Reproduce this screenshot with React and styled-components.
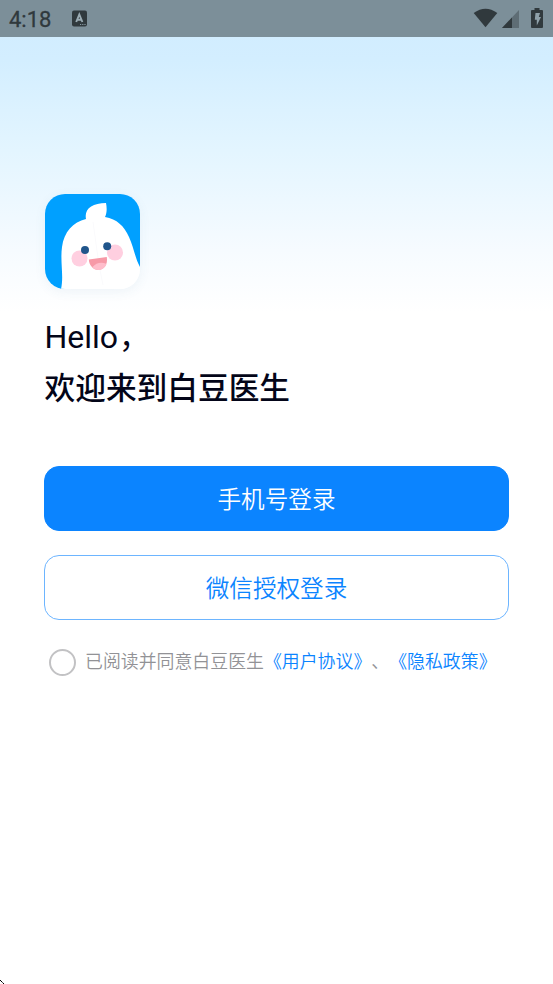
import React, { useState } from "react";
import styled, { createGlobalStyle } from "styled-components";

const GlobalStyle = createGlobalStyle`
  * { box-sizing: border-box; }
  body { margin: 0; background: #fff; font-family: Roboto, "Noto Sans CJK SC", sans-serif; text-spacing-trim: space-all; }
  button { font-family: inherit; text-spacing-trim: inherit; }
`;

const Screen = styled.div`
  position: relative;
  height: 984px;
  overflow: hidden;
  background: linear-gradient(180deg, #cfecff 0, #d3eeff 60px, #e3f5ff 150px, #f6fbff 250px, #fff 312px);
`;

const StatusBar = styled.header`
  height: 37px;
  display: flex;
  align-items: center;
  padding: 0 9px;
  background: #7c8f99;
  color: #30393d;
`;

const Clock = styled.span`
  width: 63px;
  font-size: 22px;
  font-weight: 400;
  -webkit-text-stroke: 0.3px currentColor;
  line-height: 26px;
  padding-top: 2px;
`;

const StatusIcons = styled.svg`
  display: block;
  margin-left: auto;
`;

const Content = styled.main`
  display: flex;
  flex-direction: column;
  padding: 157px 44px 0;
`;

const Logo = styled.svg`
  display: block;
  width: 95px;
  height: 95px;
  margin-left: 1px;
  border-radius: 20px;
  box-shadow: 0 3px 12px rgba(60, 110, 160, 0.07);
`;

const Hello = styled.div`
  margin: 23px 0 0 0.4px;
  height: 51px;
  line-height: 50px;
  font-size: 32px;
  color: #030518;
`;

const Comma = styled.span`
  margin-left: 1px;
  font-size: 30.7px;
`;

const Title = styled.h1`
  margin: 0 0 0 0.5px;
  height: 51px;
  line-height: 51px;
  font-size: 30.7px;
  font-weight: 500;
  color: #030518;
`;

const LoginButton = styled.button`
  height: 65px;
  margin-top: ${(p) => p.$gap}px;
  padding: ${(p) => (p.$filled ? 3 : 2)}px 0 0;
  border: 1px solid ${(p) => (p.$filled ? "#0b84ff" : "#6db5ff")};
  border-radius: 15px;
  background: ${(p) => (p.$filled ? "#0b84ff" : "#fff")};
  color: ${(p) => (p.$filled ? "#fff" : "#0b84ff")};
  font-size: 23.6px;
  font-weight: 350;
  line-height: 34px;
`;

const Agreement = styled.div`
  display: flex;
  align-items: center;
  height: 28px;
  margin: 28px 0 0 5px;
  font-family: "Noto Sans CJK SC", sans-serif;
  font-size: 17.9px;
  font-weight: 350;
  line-height: 28px;
  white-space: nowrap;
  color: #929296;
`;

const Radio = styled.button`
  flex: none;
  width: 27px;
  height: 27px;
  margin: 0 9px 0 0;
  padding: 0;
  border: 2px solid #c2c2c4;
  border-radius: 50%;
  background: ${(p) => (p.$checked ? "#0b84ff" : "#fff")};
`;

const Terms = styled.span`
  padding-bottom: 4px;
`;

const Link = styled.span`
  color: #0b84ff;
`;

const Cursor = styled.svg`
  position: absolute;
  left: 0;
  bottom: 0;
`;

function BeanLogo() {
  return (
    <Logo viewBox="0 0 95 95">
      <path d="M0 0H95V73L70 95H0Z" fill="#00a0ff" />
      <path
        d="M16 95 C19 82 15 68 17 53 C19 38 28 28 41 25 C39 15 47 9 61 9 C62 14 62 19 60 23 C72 25 79 32 84 43 C89 54 90 64 95 73 V95 Z"
        fill="#fff"
      />
      <path d="M48 28 C51 48 53 69 58 91" fill="none" stroke="#fafafc" strokeWidth="1" />
      <circle cx="34.5" cy="64.5" r="8" fill="#ffcfe0" />
      <circle cx="70" cy="58.5" r="8" fill="#ffcfe0" />
      <circle cx="40" cy="56" r="4" fill="#20558b" />
      <circle cx="62.2" cy="52.3" r="4" fill="#20558b" />
      <path d="M43.8 65.5 L61.8 63 C63 71 59 75 54 76 C48 76 44 71 43.8 65.5Z" fill="#f799a7" />
      <path d="M47.5 73 C51 68.5 57 67.5 61.5 70 C58 78 50 77 47.5 73Z" fill="#ffbdcb" />
    </Logo>
  );
}

export default function App() {
  const [checked, setChecked] = useState(false);
  return (
    <>
      <GlobalStyle />
      <Screen>
        <StatusBar>
          <Clock>4:18</Clock>
          <svg width="15" height="17" viewBox="0 -0.5 15 17">
            <rect width="15" height="16" rx="2" fill="#30393d" />
            <path d="M4.2 11.5 7.3 4 10.4 11.5M5.2 9.2h4.2" fill="none" stroke="#9aabb3" strokeWidth="1.9" />
            <path d="M8 14h1.2M10.2 14h1.2M12.4 14h1.2" stroke="#8799a2" strokeWidth="1" />
          </svg>
          <StatusIcons width="71" height="21" viewBox="473 8 71 21">
            <path d="M473.7 13Q485.5 4.5 497.3 13L485.5 27.3Z" fill="#30393d" />
            <path d="M502 28 519 10V28Z" fill="#5e6d75" />
            <path d="M502 28 512 17.4V28Z" fill="#30393d" />
            <path d="M534.5 8h5v2H542q1 0 1 1V27q0 1-1 1H532q-1 0-1-1V11q0-1 1-1h2.5Z" fill="#30393d" />
            <path d="M535.5 13H540L538.8 17H541L536.8 25.5V19.8H534.8Z" fill="#8fa1aa" />
          </StatusIcons>
        </StatusBar>
        <Content>
          <BeanLogo />
          <Hello>
            Hello<Comma>，</Comma>
          </Hello>
          <Title>欢迎来到白豆医生</Title>
          <LoginButton $filled $gap={52}>手机号登录</LoginButton>
          <LoginButton $gap={24}>微信授权登录</LoginButton>
          <Agreement>
            <Radio aria-label="同意协议" $checked={checked} onClick={() => setChecked(!checked)} />
            <Terms>
              已阅读并同意白豆医生<Link>《用户协议》</Link>、<Link>《隐私政策》</Link>
            </Terms>
          </Agreement>
        </Content>
        <Cursor width="4" height="4" viewBox="0 0 4 4" shapeRendering="crispEdges">
          <path d="M0 0h1v1H0zM1 1h1v1H1zM3 3h1v1H3z" fill="#000" />
          <path d="M2 2h1v1H2z" fill="#555" />
        </Cursor>
      </Screen>
    </>
  );
}
